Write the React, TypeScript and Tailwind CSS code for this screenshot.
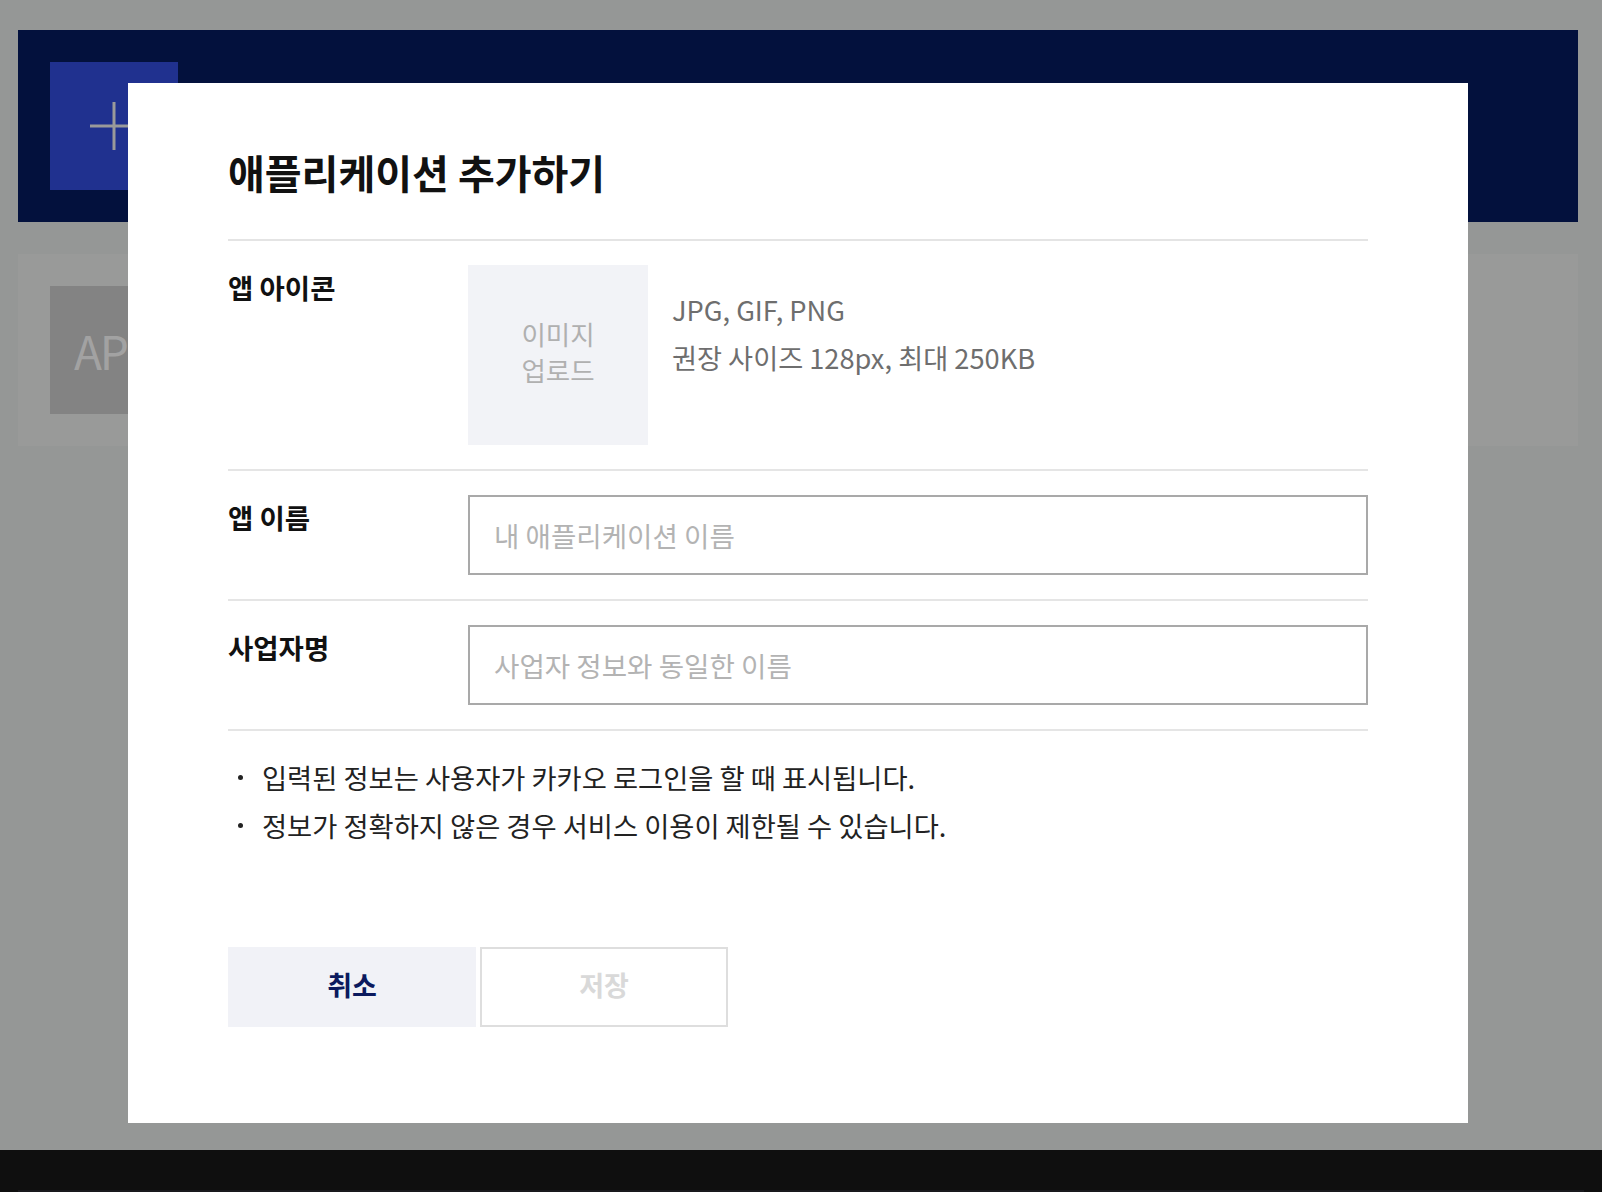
import React from "react";

const font = { fontFamily: '"Noto Sans CJK KR", "Noto Sans", sans-serif' };

const FormRow: React.FC<{ label: string; children: React.ReactNode }> = ({ label, children }) => (
  <div className="flex py-[24px] border-b-2 border-[#e5e5e5]">
    <div className="w-[240px] shrink-0 text-[27.5px] leading-[44px] font-bold text-[#111]">
      {label}
    </div>
    <div className="flex-1">{children}</div>
  </div>
);

const App: React.FC = () => {
  return (
    <div className="relative w-[1602px] h-[1192px] overflow-hidden" style={font}>
      {/* page behind the dimmed overlay */}
      <div className="h-[1150px] bg-[#959796] pt-[30px] pl-[18px] pr-[24px] flex flex-col gap-[32px]">
        <div className="h-[192px] bg-[#03113d] p-[32px]">
          <div className="w-[128px] h-[128px] bg-[#20318f] flex items-center justify-center">
            <svg width="48" height="48" viewBox="0 0 48 48">
              <path d="M24 0v48M0 24h48" stroke="#9a9a9a" strokeWidth="3" fill="none" />
            </svg>
          </div>
        </div>
        <div className="h-[192px] bg-[#999a99] p-[32px]">
          <div className="w-[128px] h-[128px] bg-[#838383] flex items-center justify-center text-[46px] tracking-[-2px] text-[#a2a2a2]">
            APP
          </div>
        </div>
      </div>
      <div className="h-[42px] bg-[#0f0f0f] flex flex-col justify-end px-[18px]">
        <div className="h-[2px] bg-[#19191d]" />
      </div>

      {/* modal */}
      <div className="absolute left-[128px] top-[83px] w-[1340px] h-[1040px] bg-white px-[100px] pt-[62px]">
        <h2 className="text-[40px] leading-[54px] font-bold text-[#111] pb-[40px] border-b-2 border-[#e4e4e4]">
          애플리케이션 추가하기
        </h2>

        <FormRow label="앱 아이콘">
          <div className="flex gap-[24px]">
            <div className="w-[180px] h-[180px] bg-[#f2f3f7] flex items-center justify-center pb-[6px] text-center text-[26.5px] leading-[36px] text-[#b0b0b0]">
              이미지
              <br />
              업로드
            </div>
            <div className="mt-[20px] text-[27.2px] leading-[48px] text-[#6e6e6e]">
              <p>JPG, GIF, PNG</p>
              <p>권장 사이즈 128px, 최대 250KB</p>
            </div>
          </div>
        </FormRow>

        <FormRow label="앱 이름">
          <input
            className="w-full h-[80px] border-2 border-[#a9a9a9] px-[24px] text-[27.6px] text-[#111] placeholder:text-[#b3b3b3] outline-none"
            style={font}
            placeholder="내 애플리케이션 이름"
          />
        </FormRow>

        <FormRow label="사업자명">
          <input
            className="w-full h-[80px] border-2 border-[#a9a9a9] px-[24px] text-[27.6px] text-[#111] placeholder:text-[#b3b3b3] outline-none"
            style={font}
            placeholder="사업자 정보와 동일한 이름"
          />
        </FormRow>

        <ul className="pt-[22px] text-[27.3px] leading-[48px] text-[#222]">
          {[
            "입력된 정보는 사용자가 카카오 로그인을 할 때 표시됩니다.",
            "정보가 정확하지 않은 경우 서비스 이용이 제한될 수 있습니다.",
          ].map((t) => (
            <li key={t} className="flex items-center">
              <span className="w-[5px] h-[5px] rounded-full bg-[#222] ml-[10px] mr-[19px] shrink-0" />
              {t}
            </li>
          ))}
        </ul>

        <div className="mt-[98px] flex gap-[4px]">
          <button
            className="w-[248px] h-[80px] pb-[3px] bg-[#f1f2f7] text-[27px] font-bold text-[#0b1a5e]"
            style={font}
          >
            취소
          </button>
          <button
            className="w-[248px] h-[80px] pb-[3px] bg-white border-2 border-[#dedede] text-[27px] font-bold text-[#d9d9d9]"
            style={font}
            disabled
          >
            저장
          </button>
        </div>
      </div>
    </div>
  );
};

export default App;
